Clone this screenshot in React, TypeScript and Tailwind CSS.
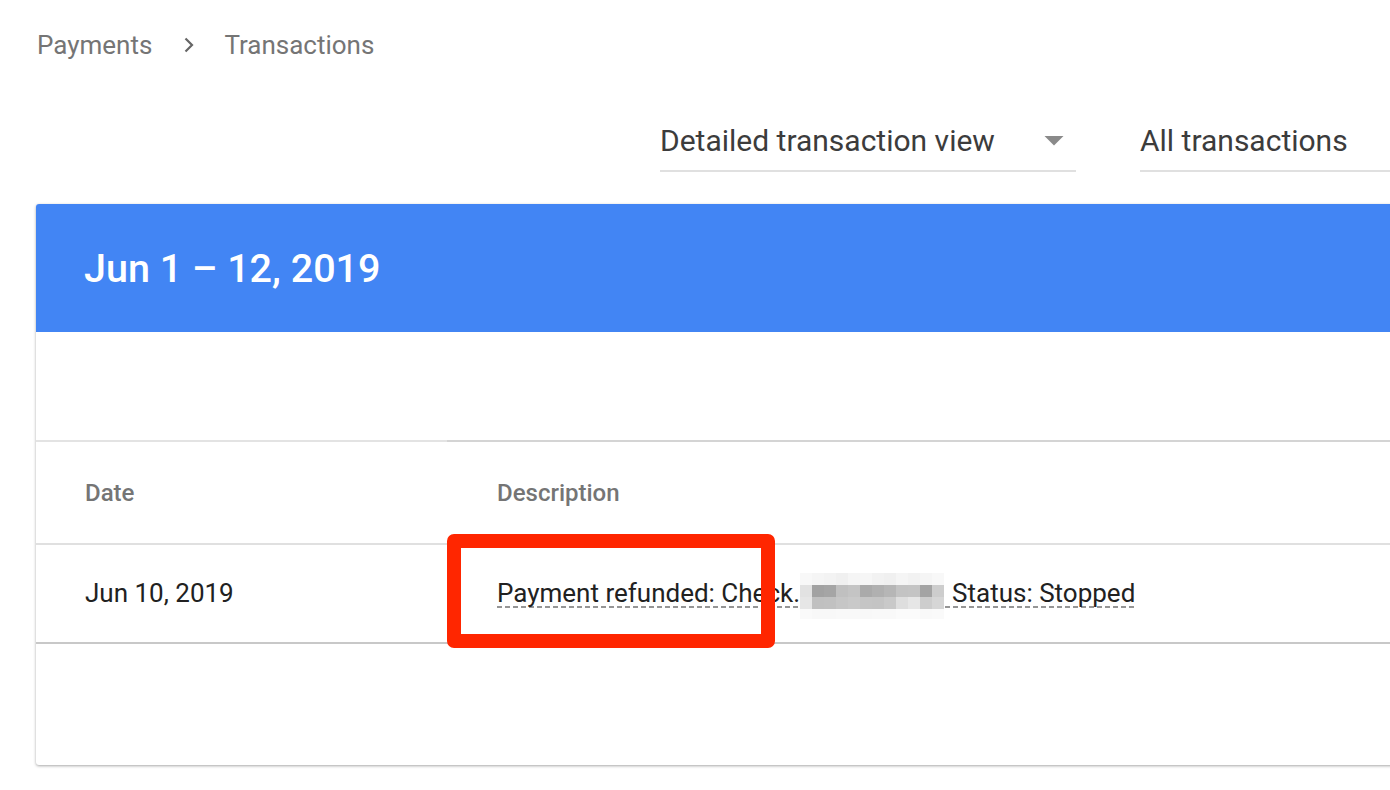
import React from "react";

// pixelated redaction block, 12 x 4 cells of grey
const pixelRows = [
  ["#f8f8f8", "#f5f5f5", "#f3f3f3", "#f0f0f0", "#f5f5f5", "#f6f6f6", "#f2f2f2", "#f0f0f0", "#f5f5f5", "#f2f2f2", "#f5f5f5", "#f8f8f8"],
  ["#e2e2e2", "#a2a2a2", "#a5a5a5", "#c0c0c0", "#c4c4c4", "#aaaaaa", "#b0b0b0", "#b6b6b6", "#c3c3c3", "#c4c4c4", "#a4a4a4", "#cdcdcd"],
  ["#e6e6e6", "#c0c0c0", "#c1c1c1", "#c6c6c6", "#c9c9c9", "#c5c5c5", "#c4c4c4", "#c9c9c9", "#dedede", "#e6e6e6", "#cdcdcd", "#d6d6d6"],
  ["#fafafa", "#f8f8f8", "#f8f8f8", "#f9f9f9", "#f9f9f9", "#f8f8f8", "#f9f9f9", "#f9f9f9", "#fbfbfb", "#fbfbfb", "#f9f9f9", "#fafafa"],
];

function Redacted() {
  return (
    <span className="inline-flex flex-col align-middle ml-[0px] mr-[8px] relative top-[1px]">
      {pixelRows.map((row, r) => (
        <span key={r} className={r === 3 ? "flex h-[10px]" : "flex h-[12px]"}>
          {row.map((c, i) => (
            <span key={i} className="w-[12px] h-full" style={{ background: c }} />
          ))}
        </span>
      ))}
    </span>
  );
}

export default function App() {
  return (
    <div className="w-[1390px] h-[790px] overflow-hidden bg-white font-['Roboto',sans-serif]">
      {/* Breadcrumb */}
      <div className="flex items-center pl-[37px] pt-[29px] text-[26px] leading-[32px] text-[#757575]">
        <span>Payments</span>
        <svg className="ml-[32px] mr-[30px]" width="10" height="16" viewBox="0 0 10 16">
          <path d="M1.5 1.5 L8 8 L1.5 14.5" fill="none" stroke="#666" strokeWidth="2.2" />
        </svg>
        <span>Transactions</span>
      </div>

      {/* Filters */}
      <div className="flex gap-[64px] pl-[660px] mt-[62px] text-[30px] leading-[36px] text-[#3c3c3c]">
        <div className="w-[416px] shrink-0 flex items-center justify-between pb-[11px] border-b-2 border-[#e0e0e0]">
          <span className="whitespace-nowrap">Detailed transaction view</span>
          <svg className="mr-[12px]" width="20" height="10" viewBox="0 0 20 10">
            <path d="M0.5 0 L19.5 0 L10 9.5 Z" fill="#8a8a8a" />
          </svg>
        </div>
        <div className="w-[400px] shrink-0 pb-[11px] border-b-2 border-[#e0e0e0]">
          <span className="whitespace-nowrap">All transactions</span>
        </div>
      </div>

      {/* Card */}
      <div className="ml-[36px] mt-[32px] w-[1420px] rounded-[3px] bg-white shadow-[0_1px_3px_rgba(0,0,0,0.35)] overflow-hidden">
        <div className="h-[128px] bg-[#4285f4] flex items-center pl-[48px] pt-[1px]">
          <h1 className="text-white text-[39.5px] font-medium">Jun 1 – 12, 2019</h1>
        </div>

        <div className="h-[108px]" />

        {/* Column headers */}
        <div className="flex h-[103px] text-[24px] font-medium text-[#757575]">
          <div className="w-[411px] border-t-2 border-[#e3e3e3] pl-[49px] flex items-center pt-[1px]">Date</div>
          <div className="flex-1 border-t-2 border-[#d4d4d4] pl-[50px] flex items-center pt-[1px]">Description</div>
        </div>

        {/* Row */}
        <div className="flex h-[101px] border-t-2 border-b-2 border-t-[#e0e0e0] border-b-[#c8c8c8] text-[26px] text-[#212121]">
          <div className="w-[411px] pl-[49px] flex items-center">Jun 10, 2019</div>
          <div className="flex-1 pl-[50px] flex items-center relative">
            <div className="pt-[3px]">
              <span className="bg-[image:repeating-linear-gradient(to_right,#959595_0_5px,transparent_5px_8px)] bg-no-repeat bg-bottom bg-[length:100%_2px]">
                Payment refunded: Check.
                <Redacted />
                Status: Stopped
              </span>
            </div>
            <div className="absolute left-0 top-[-11px] w-[328px] h-[114px] border-[14px] border-[#ff2600] rounded-[7px]" />
          </div>
        </div>

        <div className="h-[121px]" />
      </div>
    </div>
  );
}
